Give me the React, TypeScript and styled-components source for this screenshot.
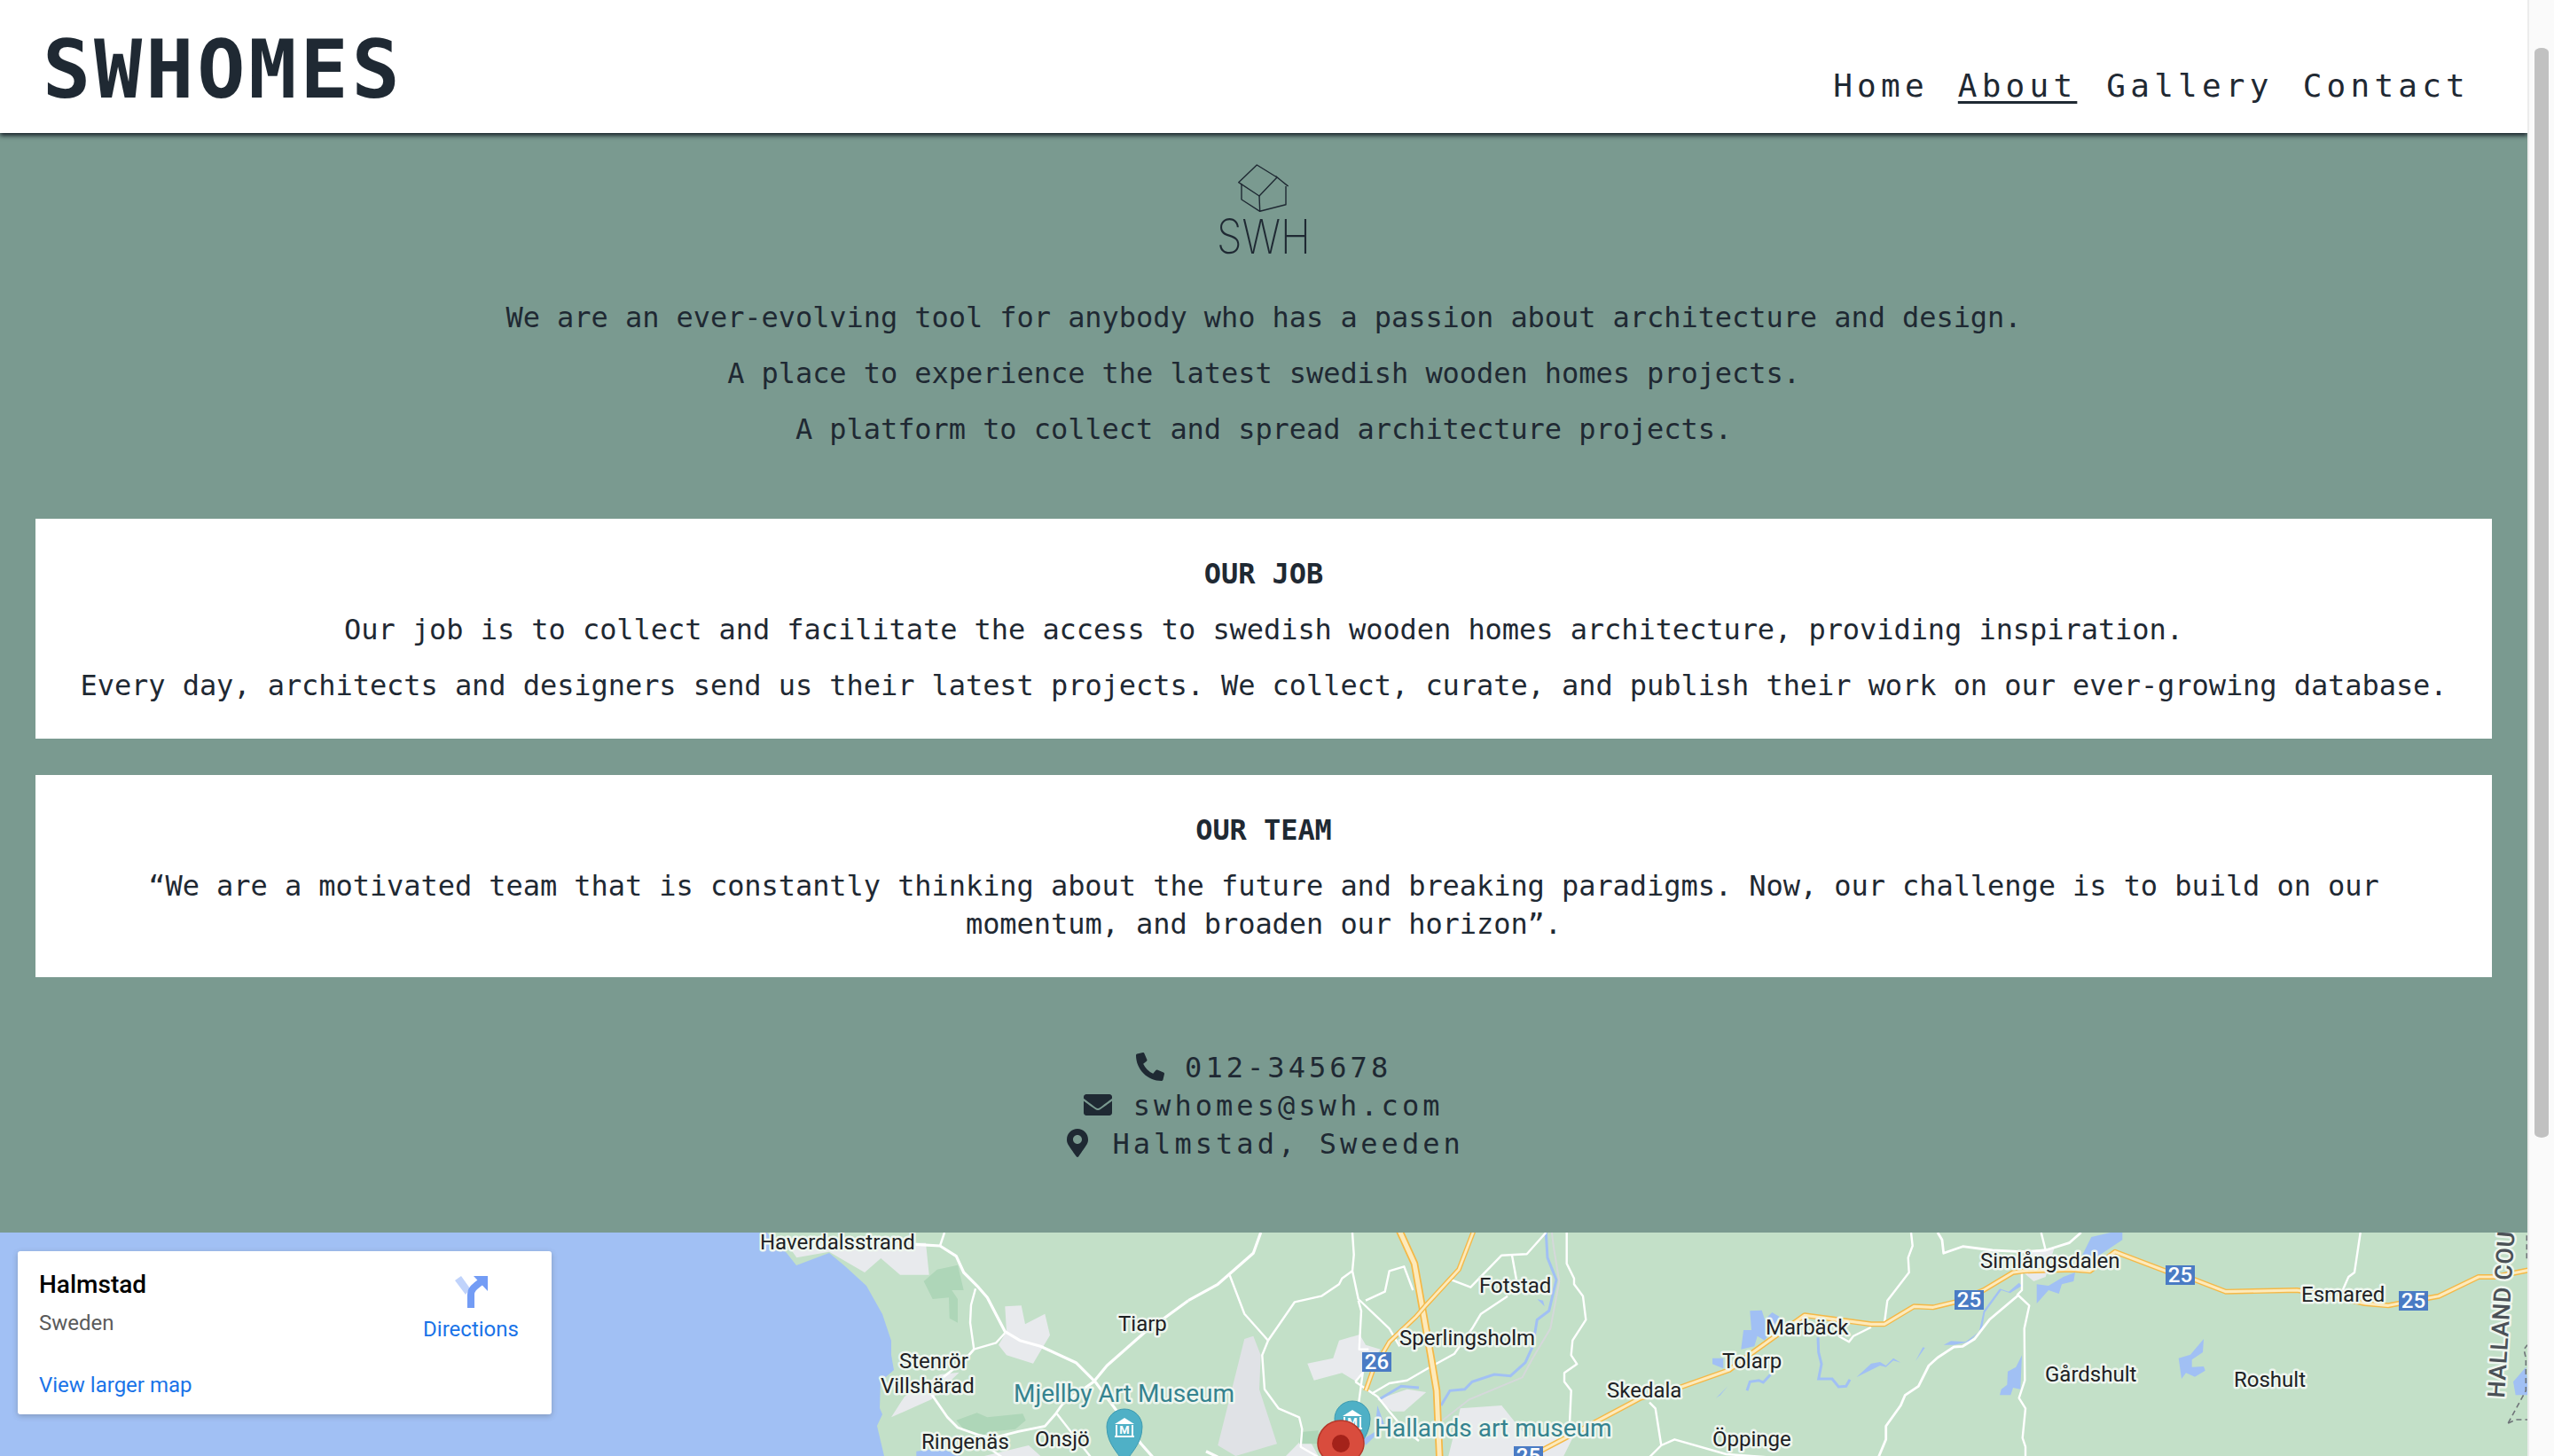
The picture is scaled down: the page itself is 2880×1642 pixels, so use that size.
import React from "react";
import styled, { createGlobalStyle } from "styled-components";
import { FaPhoneAlt, FaEnvelope, FaMapMarkerAlt } from "react-icons/fa";

const INK = "#1f2933";
const MONO = `"DejaVu Sans Mono", "Liberation Mono", monospace`;

const Global = createGlobalStyle`
  html, body { margin: 0; padding: 0; height: 100%; overflow: hidden; }
  * { box-sizing: border-box; }
`;

const Shell = styled.div`
  display: flex;
  height: 100vh;
`;

const Page = styled.div`
  flex: 0 0 2850px;
  overflow: hidden;
  background: #7a9a90;
  color: ${INK};
  font-family: ${MONO};
`;

const ScrollGutter = styled.div`
  flex: 1;
  background: #fafafa;
  border-left: 2px solid #ececec;
  padding: 54px 6px 0 6px;
`;

const ScrollThumb = styled.div`
  height: 1229px;
  background: #c1c1c1;
  border-radius: 8px / 5px;
`;

const Header = styled.header`
  position: relative;
  z-index: 2;
  height: 150px;
  background: #fff;
  box-shadow: 0 3px 5px rgba(20, 30, 38, 0.95);
  display: flex;
  justify-content: space-between;
  align-items: flex-start;
  padding: 0 65px 0 48px;
`;

const Brand = styled.h1`
  margin: 24px 0 0;
  font-size: 90px;
  letter-spacing: 3.9px;
  line-height: 110px;
  font-weight: 700;
  color: ${INK};
`;

const Nav = styled.nav`
  display: flex;
  gap: 33px;
  margin-top: 76px;
`;

const NavLink = styled.a<{ $active?: boolean }>`
  font-size: 36px;
  line-height: 42px;
  letter-spacing: 5.23px;
  color: ${INK};
  text-decoration: ${(p) => (p.$active ? "underline" : "none")};
  text-decoration-thickness: 3px;
  text-underline-offset: 5px;
`;

const Main = styled.main`
  padding: 30px 40px 78px;
  text-align: center;
`;

const LogoMark = styled.svg`
  display: block;
  width: 110px;
  height: 110px;
  margin: 0 auto 47px;
  overflow: visible;
`;

const LogoLetters = styled.text`
  font-family: Inter, "Noto Sans", sans-serif;
  font-weight: 200;
  font-size: 54px;
  fill: ${INK};
`;

const Copy = styled.p`
  margin: 0 0 20px;
  font-size: 32px;
  line-height: 43px;
  letter-spacing: -0.064px;
`;

const Card = styled.section`
  background: #fff;
  padding: 41px 40px 18px;
  margin-top: 41px;
`;

const Intro = styled.div`
  margin-bottom: 79px;
`;

const CardTitle = styled.h2`
  margin: 0 0 20px;
  font-size: 32px;
  line-height: 43px;
  letter-spacing: -0.064px;
  font-weight: 700;
`;

const Contact = styled.address`
  margin-top: 81px;
  font-style: normal;
`;

const ContactLine = styled.div`
  font-size: 32px;
  line-height: 43px;
  letter-spacing: 4.05px;
  svg { height: 1em; width: auto; vertical-align: -4px; }
`;

const MapFrame = styled.div`
  position: relative;
  height: 732px;
  overflow: hidden;
  background: #a1c0f4;
`;

const MapArt = styled.svg`
  display: block;
  width: 2850px;
  height: 732px;
`;

const Place = styled.text<{ $size?: number; $tone?: string; $weight?: number }>`
  font-family: Roboto, "Liberation Sans", sans-serif;
  font-size: ${(p) => p.$size ?? 24}px;
  font-weight: ${(p) => p.$weight ?? 400};
  fill: ${(p) => p.$tone ?? "#202124"};
  stroke: #eef6ef;
  stroke-width: 5px;
  stroke-linejoin: round;
  paint-order: stroke;
`;

const Shield = styled.text`
  font-family: Roboto, "Liberation Sans", sans-serif;
  font-size: 24px;
  font-weight: 500;
  fill: #fff;
  text-anchor: middle;
`;

const PinGlyph = styled.text`
  font-family: Roboto, "Liberation Sans", sans-serif;
  font-size: 13px;
  font-weight: 700;
  fill: #fff;
  text-anchor: middle;
`;

const InfoCard = styled.div`
  position: absolute;
  left: 20px;
  top: 21px;
  width: 602px;
  height: 184px;
  background: #fff;
  border-radius: 3px;
  box-shadow: 0 2px 6px rgba(60, 64, 67, 0.3);
  padding: 22px 26px 0 24px;
  display: grid;
  grid-template-columns: 1fr 130px;
  grid-template-rows: 1fr auto;
  font-family: Roboto, "Liberation Sans", sans-serif;
`;

const InfoTitle = styled.div`
  font-size: 28px;
  line-height: 32px;
  font-weight: 500;
  color: #000;
`;

const InfoSub = styled.div`
  margin-top: 13px;
  font-size: 24px;
  line-height: 28px;
  color: #5b5b5b;
`;

const DirectionsLink = styled.a`
  display: flex;
  flex-direction: column;
  align-items: center;
  margin-top: 6px;
  font-size: 24px;
  line-height: 28px;
  color: #1a73e8;
  svg { margin-bottom: 10px; }
`;

const LargerMap = styled.a`
  grid-column: 1 / -1;
  font-size: 24px;
  line-height: 28px;
  color: #1a73e8;
  padding-bottom: 19px;
`;

const X = { a: 820, b: 1340, c: 1860, d: 2360 };
const mapPts = (x0: number, s: string) =>
  s
    .trim()
    .split(/\s+/)
    .map((t) => {
      const [a, b] = t.split(",").map(Number);
      return `${(x0 + a / 3).toFixed(1)},${(1385 + b / 3).toFixed(1)}`;
    })
    .join(" ");

const urban: [number, string, string?][] = [
  [X.a, "235,100 345,80 465,150 520,102 585,158 683,158 672,50 200,50"],
  [X.a, "940,265 995,262 1008,325 1075,290 1092,362 1035,458 945,430 918,395 945,350"],
  [X.a, "555,640 690,580 785,488 720,495 600,570"],
  [X.a, "870,771 1020,735 1060,771"],
  [X.b, "100,735 190,375 220,365 245,430 240,545 300,730 160,771", "#e0e2e6"],
  [X.b, "403,458 490,440 510,380 580,360 600,395 650,410 600,480 570,520 520,490 425,515"],
  [X.b, "640,580 740,545 805,555 730,620 690,620"],
  [X.b, "330,771 400,700 440,771"],
  [X.b, "880,771 920,610 1060,600 1140,700 1300,710 1270,771"],
  [X.c, "1270,80 1370,65 1340,165 1300,180 1265,150"],
];

const forest: [number, string][] = [
  [X.a, "665,180 710,140 780,125 800,210 760,210 780,240 780,320 752,305 750,235 695,240"],
  [X.a, "775,650 845,625 880,640 1000,628 1010,650 975,680 880,690 870,700 800,680"],
  [X.b, "380,690 440,685 440,730 375,730"],
];

const lakes: [number, string][] = [
  [X.a, "640,755 720,745 790,771 640,771"],
  [X.b, "1180,240 1200,245 1205,265"],
  [X.b, "640,600 665,670 600,735 590,715 630,690"],
  [X.c, "340,280 380,278 390,310 415,285 440,300 390,380 365,365 355,400 310,410 318,345 345,345"],
  [X.c, "213,440 250,440 250,475 213,460"],
  [X.c, "700,505 750,458 780,453 800,465 825,440 850,455 825,448 800,470 780,465"],
  [X.c, "900,450 925,403 932,405"],
  [X.c, "225,575 265,535 240,565"],
  [X.c, "995,395 1020,382 1070,385 1115,350 1130,280 1185,205 1215,215 1250,185 1260,195 1220,220 1190,210 1135,285 1125,340 1080,385 1030,395"],
  [X.c, "1310,190 1350,195 1400,165 1440,150 1435,180 1395,190 1385,222 1350,210 1310,255"],
  [X.c, "1460,100 1495,30 1560,15 1600,15 1600,40 1510,100"],
  [X.c, "1260,430 1255,545 1230,540 1222,565 1185,565 1190,545 1210,530 1212,485 1240,470"],
  [X.d, "375,375 372,420 335,445 335,470 375,468 380,482 345,503 315,490 300,510 290,440 330,428"],
  [X.d, "1465,470 1475,565 1430,565 1422,520"],
];

const streams: [number, string][] = [
  [X.b, "1210,15 1215,100 1245,175 1220,280 1180,310 1165,400 1140,455 1090,500 1035,495 960,520 935,545 885,550 855,600"],
  [X.b, "645,580 720,535 780,540"],
  [X.c, "570,370 572,420 582,460 572,510 618,510 640,537 665,535 678,512"],
  [X.c, "330,550 340,520 370,515 385,522 410,495"],
];

const roads: [number, string, number?][] = [
  [X.a, "635,55 720,60 775,95 800,150 850,200 880,235 940,350 990,380 1060,400 1180,455 1245,520 1400,730 1440,775", 3.2],
  [X.a, "735,15 720,60"],
  [X.a, "840,205 825,260 822,320 835,410"],
  [X.a, "835,410 910,388 940,355"],
  [X.a, "835,410 800,450 730,505 690,560 745,640 780,675 850,700 900,710 985,688 1075,670 1110,630 1135,595", 2.8],
  [X.a, "1115,628 1230,775"],
  [X.a, "1560,245 1410,355 1285,465 1240,520 1135,595", 3.2],
  [X.a, "880,740 930,775"],
  [X.b, "0,245 100,190 220,85 245,15", 3.2],
  [X.b, "140,160 190,290 270,380"],
  [X.b, "270,380 360,250 450,230 510,190 520,170 555,145"],
  [X.b, "555,15 560,90 555,145 575,240 680,340 715,400"],
  [X.b, "575,245 585,280 578,410 610,410"],
  [X.b, "600,245 665,215 680,145 730,130 760,210"],
  [X.b, "270,380 250,430 258,545 305,610 375,640 385,680 380,740 440,775"],
  [X.b, "565,520 590,490 570,640"],
  [X.b, "565,520 640,570 680,620 730,680 780,720"],
  [X.b, "620,560 680,525 740,515 810,475 900,425 960,340 990,290 1080,230"],
  [X.b, "890,175 955,200 1060,92 1145,88 1210,15"],
  [X.b, "1095,92 1110,175"],
  [X.b, "1280,15 1280,120 1305,170 1305,190 1335,230 1345,310 1300,380 1295,430 1315,460 1272,490 1272,520 1295,550 1290,660"],
  [X.b, "60,755 100,775", 3.2],
  [X.c, "885,15 890,60 875,100 878,150 805,245 795,320"],
  [X.c, "0,590 20,610 40,735"],
  [X.c, "0,775 40,735 85,715 260,765 400,775"],
  [X.c, "975,15 990,40 995,85 1060,62 1160,75 1260,80 1340,75 1420,50 1460,15", 2.8],
  [X.c, "1325,15 1340,75"],
  [X.c, "1260,150 1260,210 1245,225 1285,262 1268,340 1270,515 1250,575 1272,610 1262,710 1272,740 1272,775"],
  [X.c, "1250,225 1150,310 1100,375 1060,400 1030,402 975,438 945,465 910,535 865,565 850,600 800,670 800,715 775,775", 2.8],
  [X.c, "750,335 690,365 675,385 640,365"],
  [X.d, "905,15 885,150 865,165 845,210"],
];

const highway25 = [
  mapPts(X.b, "1190,755 1530,575"),
  mapPts(X.c, "100,540 270,480 350,420 420,370 525,295 750,325 795,325 895,265 960,268 1035,250 1130,210 1230,150 1265,145 1430,140 1490,145"),
  mapPts(X.d, "75,80 245,145 345,175 450,215 690,210 780,225 920,255 1000,262 1035,255 1170,230 1305,165 1360,165 1475,142"),
].join(" ");

const highwayE6 = mapPts(X.b, "715,10 765,120 790,260 820,430 840,550 850,775");
const highway26 = mapPts(X.b, "965,10 915,140 800,265 770,300 680,385 625,480 600,550");

const places: [string, number, number, number?, string?][] = [
  ["Haverdalsstrand", 857, 1409],
  ["Stenrör", 1014, 1543],
  ["Villshärad", 993, 1571],
  ["Ringenäs", 1039, 1634],
  ["Onsjö", 1167, 1631],
  ["Tiarp", 1261, 1501],
  ["Mjellby Art Museum", 1143, 1581, 28, "#35838f"],
  ["Hallands art museum", 1550, 1620, 28, "#35838f"],
  ["Fotstad", 1668, 1458],
  ["Sperlingsholm", 1578, 1517],
  ["Skedala", 1812, 1576],
  ["Tolarp", 1942, 1543],
  ["Marbäck", 1991, 1505],
  ["Simlångsdalen", 2233, 1430],
  ["Öppinge", 1931, 1631],
  ["Gårdshult", 2306, 1558],
  ["Esmared", 2595, 1468],
  ["Roshult", 2519, 1564],
];

const shields: [string, number, number][] = [
  ["26", 1536, 1525],
  ["25", 1707, 1631],
  ["25", 2204, 1455],
  ["25", 2442, 1427],
  ["25", 2705, 1456],
];

const MuseumPin = ({ x, y }: { x: number; y: number }) => (
  <g transform={`translate(${x} ${y})`}>
    <path d="M0 44C-3 32-20 22-20 0a20 20 0 0 1 40 0C20 22 3 32 0 44Z" fill="#4fb0c6" stroke="#3e9bb0" strokeWidth="1" />
    <path d="M-11-3 0-10 11-3Z" fill="#fff" />
    <path d="M-9-2V10M9-2V10M-11 11H11" stroke="#fff" strokeWidth="2" fill="none" />
    <PinGlyph y="8">M</PinGlyph>
  </g>
);

const Halmstad = () => (
  <MapArt viewBox="0 1390 2850 732" role="img" aria-label="Map of Halmstad">
    <polygon
      fill="#c3e0c8"
      points="860,1385 887,1413 898,1427 935,1413 953,1428 977,1450 995,1482 1005,1512 1005,1528 1008,1545 993,1558 992,1588 995,1595 989,1608 997,1642 997,2122 2850,2122 2850,1385"
    />
    {urban.map(([x, p, c], i) => <polygon key={i} points={mapPts(x, p)} fill={c ?? "#e8eaed"} />)}
    {forest.map(([x, p], i) => <polygon key={i} points={mapPts(x, p)} fill="#aed6b8" />)}
    {lakes.map(([x, p], i) => <polygon key={i} points={mapPts(x, p)} fill="#a1c0f4" />)}
    {streams.map(([x, p], i) => (
      <polyline key={i} points={mapPts(x, p)} fill="none" stroke="#a1c0f4" strokeWidth="3" />
    ))}
    <polyline
      points={mapPts(X.b, "1230,15 1235,60 1255,180 1225,340 1165,440 1130,505 950,580 860,650")}
      fill="none"
      stroke="#d5d8da"
      strokeWidth="2"
    />
    {roads.map(([x, p, w], i) => (
      <polyline key={i} points={mapPts(x, p)} fill="none" stroke="#fff" strokeWidth={w ?? 2.4} strokeLinejoin="round" />
    ))}
    <polyline points={highwayE6} fill="none" stroke="#f5b846" strokeWidth="8.5" strokeLinejoin="round" />
    <polyline points={highwayE6} fill="none" stroke="#fdeabb" strokeWidth="5" strokeLinejoin="round" />
    <polyline points={highway26} fill="none" stroke="#f5b846" strokeWidth="5.5" strokeLinejoin="round" />
    <polyline points={highway26} fill="none" stroke="#fdeabb" strokeWidth="2.8" strokeLinejoin="round" />
    <polyline points={highway25} fill="none" stroke="#f5b846" strokeWidth="6" strokeLinejoin="round" />
    <polyline points={highway25} fill="none" stroke="#fdeabb" strokeWidth="3.2" strokeLinejoin="round" />
    <g fill="none" stroke="#6f7479" strokeWidth="1.6" strokeDasharray="6 4">
      <polyline points={mapPts(X.d, "1468,25 1468,110")} />
      <polyline points={mapPts(X.d, "1405,660 1465,550 1465,440 1458,410 1470,395")} />
      <polyline points={mapPts(X.d, "1405,660 1430,648 1470,648")} />
    </g>
    {shields.map(([n, x, y], i) => (
      <g key={i}>
        <rect x={x} y={y} width="33" height="22" fill="#4a7bc4" />
        <Shield x={x + 16.5} y={y + 19}>{n}</Shield>
      </g>
    ))}
    <MuseumPin x={1268} y={1609} />
    <MuseumPin x={1525} y={1600} />
    <path d="M1512 1668C1508 1650 1486 1646 1486 1628a26 26 0 0 1 52 0C1538 1646 1516 1650 1512 1668Z" fill="#d94c3d" stroke="#b5372a" strokeWidth="1.5" />
    <circle cx="1512" cy="1628" r="10" fill="#a4221a" />
    {places.map(([t, x, y, s, c]) => (
      <Place key={t} x={x} y={y} $size={s} $tone={c}>{t}</Place>
    ))}
    <Place x={0} y={0} $size={27} $tone="#4b5157" $weight={500} letterSpacing="0.6" transform="translate(2824 1577) rotate(-86.5)">
      HALLAND COUNTY
    </Place>
  </MapArt>
);

export default function App() {
  return (
    <Shell>
      <Global />
      <Page>
        <Header>
          <Brand>SWHOMES</Brand>
          <Nav>
            <NavLink>Home</NavLink>
            <NavLink $active>About</NavLink>
            <NavLink>Gallery</NavLink>
            <NavLink>Contact</NavLink>
          </Nav>
        </Header>
        <Main>
          <LogoMark viewBox="0 0 110 110" aria-label="SWH logo">
            <g fill="none" stroke={INK} strokeWidth="1.4" strokeLinejoin="round">
              <path d="M47.3 6 26.7 25.7 50 41 70 20ZM70 20l12.7 10M68.5 18.5 81.7 29.5" />
              <path d="M30 27.3V45L50.7 58.3 80 50.7V30M50 41 50.7 58.3" />
            </g>
            <LogoLetters x="2" y="106" textLength="106" lengthAdjust="spacingAndGlyphs">SWH</LogoLetters>
          </LogoMark>
          <Intro>
            <Copy>We are an ever-evolving tool for anybody who has a passion about architecture and design.</Copy>
            <Copy>A place to experience the latest swedish wooden homes projects.</Copy>
            <Copy>A platform to collect and spread architecture projects.</Copy>
          </Intro>
          <Card>
            <CardTitle>OUR JOB</CardTitle>
            <Copy>Our job is to collect and facilitate the access to swedish wooden homes architecture, providing inspiration.</Copy>
            <Copy>Every day, architects and designers send us their latest projects. We collect, curate, and publish their work on our ever-growing database.</Copy>
          </Card>
          <Card>
            <CardTitle>OUR TEAM</CardTitle>
            <Copy>“We are a motivated team that is constantly thinking about the future and breaking paradigms. Now, our challenge is to build on our momentum, and broaden our horizon”.</Copy>
          </Card>
          <Contact>
            <ContactLine><FaPhoneAlt /> 012-345678</ContactLine>
            <ContactLine><FaEnvelope /> swhomes@swh.com</ContactLine>
            <ContactLine><FaMapMarkerAlt /> Halmstad, Sweeden</ContactLine>
          </Contact>
        </Main>
        <MapFrame>
          <Halmstad />
          <InfoCard>
            <div>
              <InfoTitle>Halmstad</InfoTitle>
              <InfoSub>Sweden</InfoSub>
            </div>
            <DirectionsLink>
              <svg width="37" height="36" viewBox="0 0 37 36" aria-hidden="true">
                <polygon points="0,5 7,0 17,14 12,21" fill="#c0d3fb" />
                <path d="M18 36V21C18 14 24 11 30 6" fill="none" stroke="#739cf5" strokeWidth="8" />
                <polygon points="21,0 37,0 37,17" fill="#739cf5" />
              </svg>
              Directions
            </DirectionsLink>
            <LargerMap>View larger map</LargerMap>
          </InfoCard>
        </MapFrame>
      </Page>
      <ScrollGutter>
        <ScrollThumb />
      </ScrollGutter>
    </Shell>
  );
}
